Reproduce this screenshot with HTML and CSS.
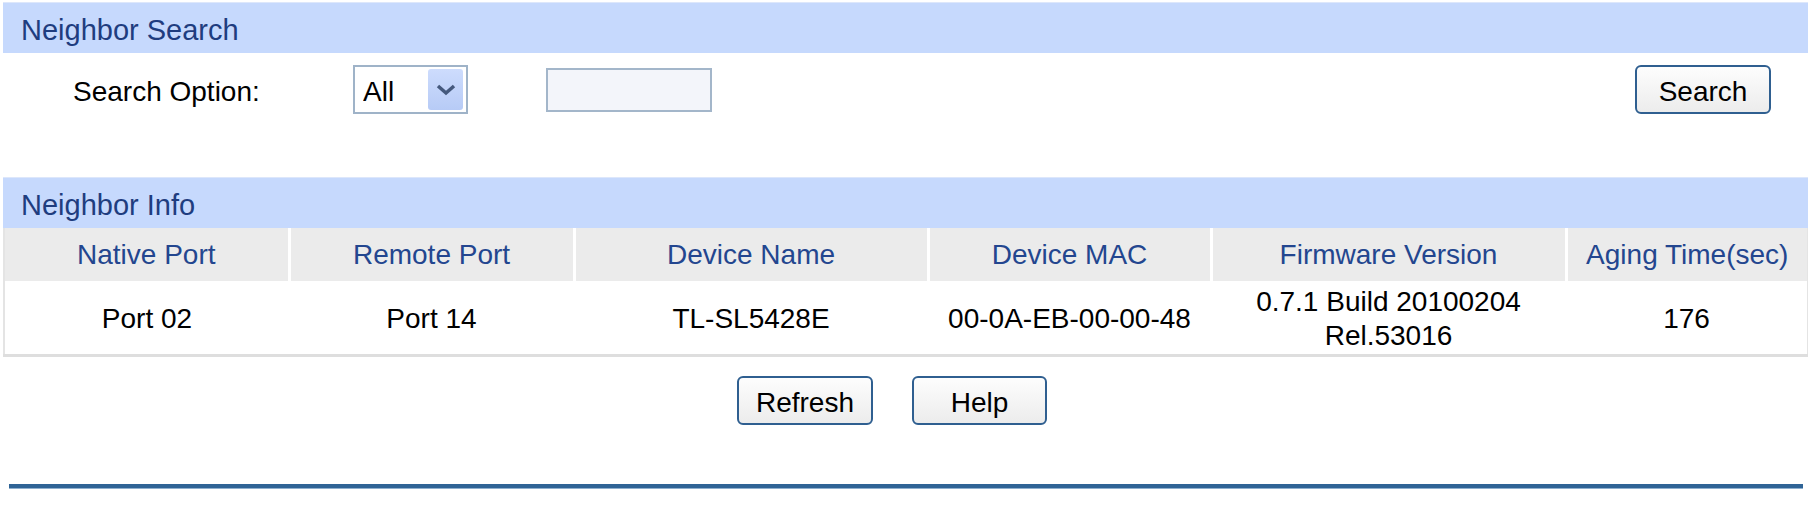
FILE: index.html
```html
<!DOCTYPE html>
<html lang="en">
  <head>
    <meta charset="UTF-8" />
    <meta name="viewport" content="width=device-width, initial-scale=1.0" />
    <title>Neighbor Info</title>
    <link rel="stylesheet" href="styles.css">
  </head>

  <body>
    <div class="page">
      <div class="bar">Neighbor Search</div>

      <div class="search-row">
        <label class="label" for="option">Search Option:</label>
        <div class="select-wrap">
          <select id="option">
            <option>All</option>
            <option>Port</option>
            <option>Device Name</option>
          </select>
          <span class="arrow">
            <svg width="20" height="12" viewBox="0 0 20 12">
              <path d="M2 2 L10 9 L18 2" fill="none" stroke="#45597d" stroke-width="3.5" />
            </svg>
          </span>
        </div>
        <input class="text" type="text" />
        <button class="btn search-btn">Search</button>
      </div>

      <div class="bar">Neighbor Info</div>

      <table class="grid">
        <colgroup>
          <col class="w-native" />
          <col class="w-remote" />
          <col class="w-name" />
          <col class="w-mac" />
          <col class="w-fw" />
          <col />
        </colgroup>
        <thead>
          <tr>
            <th>Native Port</th>
            <th>Remote Port</th>
            <th>Device Name</th>
            <th>Device MAC</th>
            <th>Firmware Version</th>
            <th>Aging Time(sec)</th>
          </tr>
        </thead>
        <tbody>
          <tr>
            <td>Port 02</td>
            <td>Port 14</td>
            <td>TL-SL5428E</td>
            <td>00-0A-EB-00-00-48</td>
            <td>0.7.1 Build 20100204<br />Rel.53016</td>
            <td>176</td>
          </tr>
        </tbody>
      </table>

      <div class="actions">
        <button class="btn">Refresh</button>
        <button class="btn">Help</button>
      </div>

      <div class="rule"></div>
    </div>
  </body>
</html>
```

FILE: styles.css
```css
* {
  box-sizing: border-box;
}

html,
body {
  margin: 0;
  background-color: #fff;
  font-family: "Liberation Sans", Arial, sans-serif;
  font-size: 28px;
  color: #000;
}

.page {
  margin: 2px 4px 0 3px;
}

.bar {
  height: 51px;
  padding: 3px 0 0 18px;
  line-height: 48px;
  font-size: 29px;
  color: #1f3d7f;
  background-color: #c6d9fd;
  border-top: 1px solid #dde7fb;
}

.search-row {
  display: flex;
  align-items: center;
  height: 61px;
  padding: 12px 37px 0 70px;
  margin-bottom: 63px;
}

.label {
  width: 280px;
  padding-top: 5px;
}

.select-wrap {
  position: relative;
  width: 115px;
  height: 49px;
  border: 2px solid #9fb3c8;
  background-color: #fff;
}

.select-wrap select {
  width: 100%;
  height: 100%;
  padding: 4px 0 0 8px;
  border: none;
  outline: none;
  background: transparent;
  font: inherit;
  color: #000;
  appearance: none;
  -webkit-appearance: none;
}

.select-wrap .arrow {
  position: absolute;
  top: 2px;
  right: 3px;
  bottom: 2px;
  width: 35px;
  display: flex;
  justify-content: center;
  align-items: center;
  border-radius: 3px;
  background: linear-gradient(#cddcfd, #b7cbf6);
  pointer-events: none;
}

.text {
  width: 166px;
  height: 44px;
  margin-left: 78px;
  border: 2px solid #a3b6ca;
  background-color: #f3f5fa;
  font: inherit;
}

.btn {
  height: 49px;
  width: 136px;
  padding: 5px 0 0 0;
  border: 2px solid #2f5f90;
  border-radius: 6px;
  background: linear-gradient(#fdfdfd, #ececec);
  font: inherit;
  color: #000;
  cursor: pointer;
}

.search-btn {
  margin-left: auto;
}

.grid {
  width: 100%;
  border-collapse: collapse;
  table-layout: fixed;
  border-left: 2px solid #e4e4e4;
  border-right: 1px solid #e4e4e4;
  border-bottom: 3px solid #dedede;
}

.w-native {
  width: 285px;
}

.w-remote {
  width: 285px;
}

.w-name {
  width: 354px;
}

.w-mac {
  width: 283px;
}

.w-fw {
  width: 355px;
}

.grid th {
  height: 53px;
  padding: 0;
  font-weight: normal;
  color: #23468f;
  background-color: #ebebeb;
  border-left: 3px solid #fff;
}

.grid th:first-child {
  border-left: none;
}

.grid td {
  height: 74px;
  padding: 3px 0 0 0;
  text-align: center;
  line-height: 34px;
}

.actions {
  display: flex;
  justify-content: center;
  gap: 39px;
  padding: 19px 27px 0 0;
  margin-bottom: 59px;
}

.actions .btn:last-child {
  width: 135px;
}

.rule {
  height: 5px;
  margin: 0 5px 0 6px;
  background-color: #2f6496;
  border-bottom: 1px solid #8fb0cf;
}
```
